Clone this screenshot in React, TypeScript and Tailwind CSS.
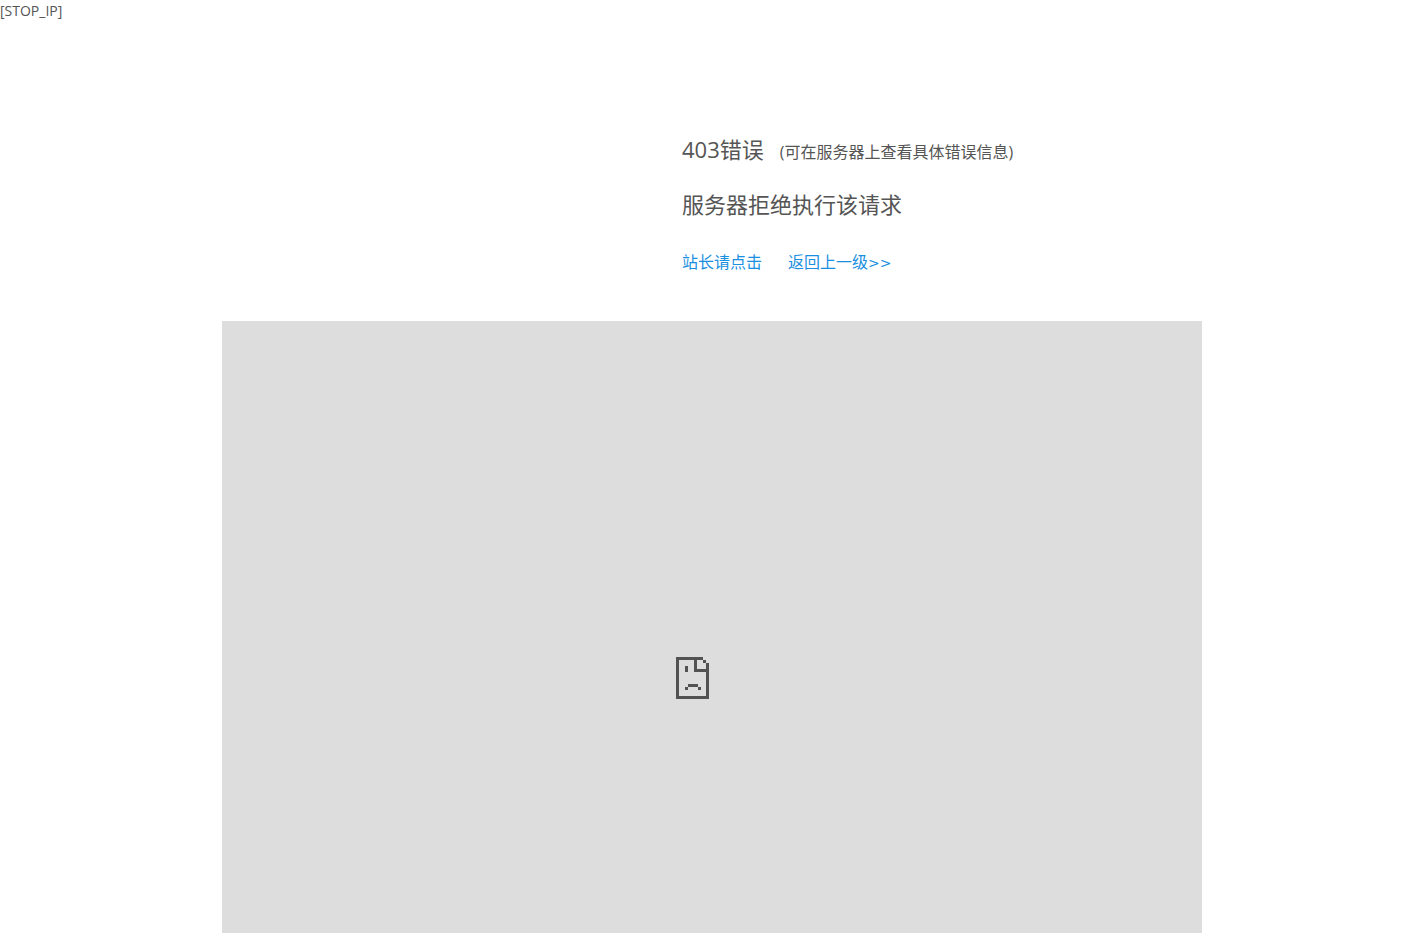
function SadPage() {
  return (
    <svg
      className="h-[42px] w-[33px]"
      viewBox="0 0 33 42"
      fill="#525252"
      shapeRendering="crispEdges"
      role="img"
      aria-label="页面无法显示"
    >
      <path d="M0 0h27v3H3v36h27V15H18V3h3v9h9V6h3v36H0z" />
      <path d="M27 3h3v3h-3z" />
      <path d="M9 9h3v6H9z" />
      <path d="M12 27h10v3H12zM9 30h3v3H9zM22 30h3v3h-3z" />
    </svg>
  );
}

export default function App() {
  return (
    <div className="flex min-h-screen flex-col bg-white font-['Open_Sans','Noto_Sans_CJK_SC',sans-serif] text-[#555]">
      <p className="text-sm leading-[22px]">[STOP_IP]</p>
      <main className="mx-auto flex w-full max-w-[980px] grow flex-col pt-[111px]">
        <section className="pl-[460px]">
          <h1 className="flex items-baseline gap-4 text-[22px] leading-8">
            403错误
            <span className="text-base">(可在服务器上查看具体错误信息)</span>
          </h1>
          <p className="mt-[23px] text-[22px] leading-8">服务器拒绝执行该请求</p>
          <nav className="mt-7 flex gap-[26px] text-base leading-7 text-[#1a8fe0]">
            <a href="#admin">站长请点击</a>
            <a href="#back">
              返回上一级<span className="font-['DejaVu_Sans',sans-serif] text-sm">&gt;&gt;</span>
            </a>
          </nav>
        </section>
        <div className="mt-[45px] flex grow justify-center bg-[#ddd] pt-[336px] pr-[39px]">
          <SadPage />
        </div>
      </main>
    </div>
  );
}
